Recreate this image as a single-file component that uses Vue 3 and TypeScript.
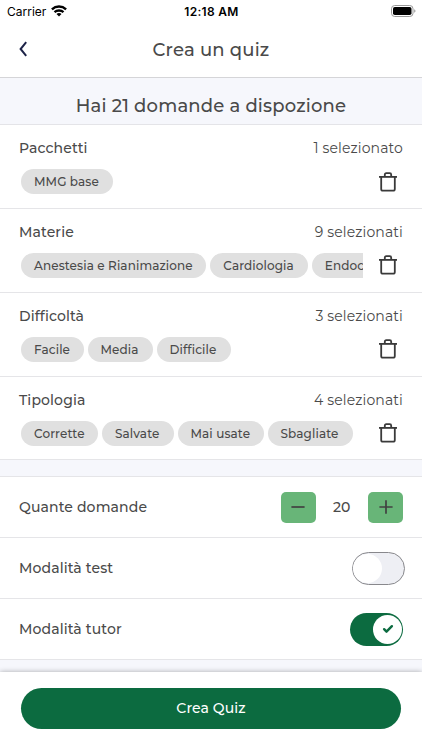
<script setup lang="ts">
import { ref } from 'vue'

interface Chip {
  label: string
  width: number
}
interface Filter {
  title: string
  count: string
  chips: Chip[]
}

const filters = ref<Filter[]>([
  { title: 'Pacchetti', count: '1 selezionato', chips: [{ label: 'MMG base', width: 92 }] },
  {
    title: 'Materie',
    count: '9 selezionati',
    chips: [
      { label: 'Anestesia e Rianimazione', width: 185.3 },
      { label: 'Cardiologia', width: 97.5 },
      { label: 'Endoc', width: 122 },
    ],
  },
  {
    title: 'Difficoltà',
    count: '3 selezionati',
    chips: [
      { label: 'Facile', width: 62.5 },
      { label: 'Media', width: 65 },
      { label: 'Difficile', width: 74.5 },
    ],
  },
  {
    title: 'Tipologia',
    count: '4 selezionati',
    chips: [
      { label: 'Corrette', width: 77 },
      { label: 'Salvate', width: 71.5 },
      { label: 'Mai usate', width: 86 },
      { label: 'Sbagliate', width: 85 },
    ],
  },
])

const amount = ref(20)
const testMode = ref(false)
const tutorMode = ref(true)
</script>

<template>
  <div class="screen">
    <div class="status">
      <div class="carrier">
        <span>Carrier</span>
        <svg class="wifi" width="16" height="12" viewBox="0 0 16 12" fill="none" stroke="#000" stroke-width="2.4">
          <path d="M.9 4.3C5 .6 11 .6 15.1 4.3" />
          <path d="M3.5 7.2c2.5-2.2 6.5-2.2 9 0" />
          <path d="M5.5 8.9 8 11.5l2.5-2.6c-1.4-1.1-3.6-1.1-5 0Z" fill="#000" stroke="none" />
        </svg>
      </div>
      <div class="clock">12:18 AM</div>
      <svg class="battery" width="25" height="12" viewBox="0 0 25 12">
        <rect x=".5" y=".5" width="21.5" height="11" rx="3.2" fill="#fff" stroke="#999" />
        <rect x="2" y="2" width="18.5" height="8" rx="1.8" fill="#000" />
        <path d="M23.3 4.2c1.5.6 1.5 3 0 3.6Z" fill="#888" />
      </svg>
    </div>
    <header class="nav">
      <svg class="back" width="10" height="16" viewBox="0 0 10 16" fill="none" stroke="#1d2348" stroke-width="2">
        <path d="M8.2 1.2 2.6 8l5.6 6.8" />
      </svg>
      <h1>Crea un quiz</h1>
    </header>
    <div class="banner">Hai 21 domande a dispozione</div>

    <section v-for="f in filters" :key="f.title" class="filter">
      <div class="head">
        <span class="label">{{ f.title }}</span>
        <span class="count">{{ f.count }}</span>
      </div>
      <div class="body">
        <div class="chips">
          <span v-for="c in f.chips" :key="c.label" class="chip" :style="{ width: c.width + 'px' }">{{ c.label }}</span>
        </div>
        <svg class="trash" width="20" height="20" viewBox="0 0 20 20" fill="none" stroke="#3a3a3a" stroke-width="1.8">
          <path d="M1 4.9h18" />
          <path d="M3.2 4.9v12c0 1.2.6 1.8 1.8 1.8h10c1.2 0 1.8-.6 1.8-1.8v-12" />
          <path d="M6.8 4.9V2.7c0-1 .5-1.5 1.5-1.5h3.4c1 0 1.5.5 1.5 1.5v2.2" />
        </svg>
      </div>
    </section>

    <div class="gap"></div>

    <div class="row">
      <span class="label">Quante domande</span>
      <div class="stepper">
        <button class="step" @click="amount--">
          <svg width="16" height="16" viewBox="0 0 16 16" stroke="#414141" stroke-width="1.7"><path d="M1.4 8h13.2" /></svg>
        </button>
        <span class="amount">{{ amount }}</span>
        <button class="step" @click="amount++">
          <svg width="16" height="16" viewBox="0 0 16 16" stroke="#414141" stroke-width="1.7"><path d="M1.4 8h13.2M8 1.2v13.6" /></svg>
        </button>
      </div>
    </div>
    <div class="row">
      <span class="label">Modalità test</span>
      <div class="toggle off" @click="testMode = !testMode"><i class="knob"></i></div>
    </div>
    <div class="row">
      <span class="label">Modalità tutor</span>
      <div class="toggle on" @click="tutorMode = !tutorMode">
        <i class="knob">
          <svg width="12" height="10" viewBox="0 0 12 10" fill="none" stroke="#0c6b40" stroke-width="2.4" stroke-linecap="round" stroke-linejoin="round">
            <path d="m2.1 5.2 2.4 2.5L9.9 2.2" />
          </svg>
        </i>
      </div>
    </div>

    <div class="rest"></div>
    <footer class="footer">
      <button class="create">Crea Quiz</button>
    </footer>
  </div>
</template>

<style>
body {
  margin: 0;
  background: #fff;
}
</style>

<style scoped>
.screen {
  width: 422px;
  height: 750px;
  overflow: hidden;
  display: flex;
  flex-direction: column;
  background: #fff;
  color: #4a4a4a;
  font-family: Montserrat, Inter, sans-serif;
  font-weight: 500;
  box-sizing: border-box;
}
.screen * {
  box-sizing: border-box;
  flex-shrink: 0;
}
.status {
  height: 22px;
  padding: 0 6px 0 7px;
  display: grid;
  grid-template-columns: 1fr auto 1fr;
  align-items: center;
  font-family: Inter, sans-serif;
  font-size: 12px;
  font-weight: 400;
  color: #000;
}
.carrier {
  display: flex;
  align-items: center;
  gap: 5px;
}
.wifi {
  margin-top: -1px;
}
.clock {
  font-size: 12px;
  font-weight: 600;
  letter-spacing: 0.3px;
}
.battery {
  justify-self: end;
  margin-top: -1px;
}
.nav {
  height: 56px;
  padding: 0 18px 1px;
  display: grid;
  grid-template-columns: 1fr auto 1fr;
  align-items: center;
  border-bottom: 1px solid #d5d5d8;
}
h1 {
  margin: 0;
  padding-top: 1px;
  font-size: 18px;
  font-weight: 500;
  letter-spacing: 0.2px;
}
.banner {
  height: 47px;
  padding-top: 10px;
  display: flex;
  align-items: center;
  justify-content: center;
  background: #f6f7fc;
  border-bottom: 1px solid #e4e4e8;
  font-size: 18px;
  letter-spacing: 0.18px;
}
.filter {
  height: 83.85px;
  padding: 13px 19px 0;
  border-bottom: 1px solid #e5e5e8;
}
.head {
  height: 20px;
  display: flex;
  justify-content: space-between;
  align-items: center;
}
.label {
  font-size: 14px;
  letter-spacing: 0.13px;
}
.count {
  font-size: 14px;
  font-weight: 400;
  letter-spacing: 0.13px;
}
.body {
  display: flex;
  justify-content: space-between;
  align-items: center;
  margin-top: 11px;
  padding: 0 5px 0 2px;
}
.chips {
  width: 342px;
  display: flex;
  gap: 4px;
  overflow: hidden;
}
.chip {
  height: 25px;
  padding-left: 13px;
  border-radius: 13px;
  background: #e0e0e0;
  display: flex;
  align-items: center;
  font-size: 12px;
  letter-spacing: 0.11px;
  white-space: nowrap;
}
.trash {
  display: block;
}
.gap {
  height: 16.6px;
  background: #f6f7fc;
  border-bottom: 1px solid #e5e5e8;
}
.row {
  height: 61px;
  padding: 1px 19px 0;
  display: flex;
  align-items: center;
  justify-content: space-between;
  border-bottom: 1px solid #e5e5e8;
}
.stepper {
  display: flex;
  align-items: center;
}
.step {
  width: 35px;
  height: 31px;
  padding: 0;
  border: 0;
  border-radius: 5px;
  background: #68b578;
  display: flex;
  align-items: center;
  justify-content: center;
}
.amount {
  width: 52.5px;
  text-align: center;
  font-size: 14px;
}
.toggle {
  width: 53px;
  height: 33px;
  border-radius: 17px;
  display: flex;
  align-items: center;
}
.toggle.off {
  margin-right: -2.4px;
  background: #eeeff4;
  border: 1px solid #88888c;
}
.toggle.on {
  background: #0c6b40;
  justify-content: flex-end;
  padding-right: 1px;
}
.knob {
  width: 29px;
  height: 29px;
  border-radius: 50%;
  background: #fff;
  display: flex;
  align-items: center;
  justify-content: center;
}
.rest {
  height: 12.4px;
  background: #f6f7fc;
}
.footer {
  flex: 1;
  padding: 16px 21px 0;
  background: #fff;
  box-shadow: 0 0 5px rgba(0, 0, 0, 0.32);
}
.create {
  display: block;
  width: 380px;
  height: 41px;
  padding: 0 0 2px;
  border: 0;
  border-radius: 21px;
  background: #0c6b40;
  color: #fff;
  font-family: inherit;
  font-size: 14px;
  font-weight: 500;
  letter-spacing: 0.1px;
}
</style>
